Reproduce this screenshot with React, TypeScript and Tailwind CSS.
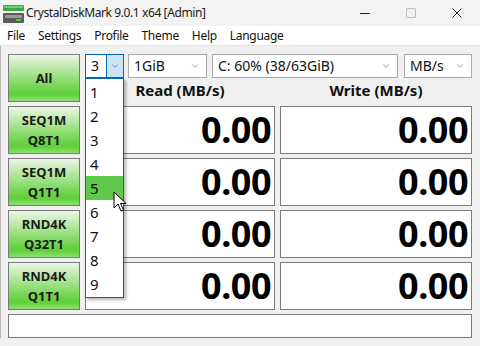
import { ChevronDown } from 'lucide-react'

const font = { fontFamily: '"Noto Sans", "Open Sans", sans-serif' }

function Combo({ text, width, open }: { text: string; width: string; open?: boolean }) {
  return (
    <div
      className={`relative flex h-[24px] items-center bg-white ${width} ${
        open ? 'border border-[#0067c0]' : 'border border-[#a8a8a8]'
      }`}
    >
      <span className="pl-[5px] text-[14px] leading-none text-[#111]">{text}</span>
      {open ? (
        <div className="ml-auto flex h-full w-[17px] items-center justify-center border-l border-[#0067c0] bg-[#cce4f7]">
          <ChevronDown size={10} strokeWidth={1.5} className="text-[#555]" />
        </div>
      ) : (
        <ChevronDown size={10} strokeWidth={1.5} className="ml-auto mr-[6px] text-[#666]" />
      )}
    </div>
  )
}

function TestButton({ lines, height }: { lines: string[]; height: string }) {
  return (
    <div
      className={`flex w-[72px] ${height} shrink-0 flex-col items-center justify-center border border-[#7a7a7a] bg-[linear-gradient(to_bottom,#eaf6e4_0%,#b9e8a6_30%,#7ed85e_65%,#5fcf3a_85%,#8ee072_100%)]`}
    >
      {lines.map((l) => (
        <span key={l} className="text-[13px] font-bold leading-[20px] text-[#1b1b1b]">
          {l}
        </span>
      ))}
    </div>
  )
}

function Value() {
  return (
    <div className="flex h-[48px] items-center justify-end border border-[#7a7a7a] bg-white pr-[3px]">
      <span className="text-[36px] font-bold leading-none tracking-[-0.5px] text-black">0.00</span>
    </div>
  )
}

function AppIcon() {
  return (
    <svg width="22" height="18" viewBox="0 0 22 18">
      <rect x="0" y="0" width="21" height="6" rx="1" fill="#3fa54a" />
      <rect x="1" y="1" width="19" height="2" fill="#6fcf72" />
      <rect x="0" y="8" width="21" height="10" rx="1" fill="#5b5b5b" />
      <rect x="2" y="10" width="17" height="3" fill="#9a9a9a" />
      <rect x="13" y="14" width="5" height="2" fill="#3fd04a" />
    </svg>
  )
}

export default function App() {
  const rows = [
    ['SEQ1M', 'Q8T1'],
    ['SEQ1M', 'Q1T1'],
    ['RND4K', 'Q32T1'],
    ['RND4K', 'Q1T1'],
  ]
  return (
    <div className="relative h-[346px] w-[480px] overflow-hidden bg-[#f0f0f0]" style={font}>
      {/* title bar */}
      <div className="flex h-[26px] items-center bg-[#f3f3f3]">
        <div className="ml-[3px] mt-[1px]">
          <AppIcon />
        </div>
        <span className="ml-[1px] text-[12px] tracking-[-0.4px] text-[#1a1a1a]">CrystalDiskMark 9.0.1 x64 [Admin]</span>
        <div className="ml-auto flex h-full items-center">
          <div className="flex w-[46px] justify-center">
            <div className="h-px w-[10px] bg-[#222]" />
          </div>
          <div className="flex w-[46px] justify-center">
            <div className="h-[10px] w-[10px] rounded-[1px] border border-[#bdbdbd]" />
          </div>
          <div className="flex w-[46px] justify-center">
            <svg width="10" height="10" viewBox="0 0 10 10">
              <path d="M0.5 0.5 L9.5 9.5 M9.5 0.5 L0.5 9.5" stroke="#222" strokeWidth="1" />
            </svg>
          </div>
        </div>
      </div>
      {/* menu */}
      <div className="flex h-[20px] items-center gap-[13px] border-b border-[#e4e4e4] bg-white pl-[7px] text-[12px] tracking-[-0.3px] text-[#111]">
        <span>File</span>
        <span>Settings</span>
        <span>Profile</span>
        <span>Theme</span>
        <span>Help</span>
        <span>Language</span>
      </div>
      {/* body */}
      <div className="flex flex-col border-l border-[#b8b8b8] pl-[7px] pt-[8px]">
        <div className="flex">
          <TestButton lines={['All']} height="h-[48px]" />
          <div className="ml-[5px] flex flex-col">
            <div className="flex h-[24px]">
              <Combo text="3" width="w-[39px]" open />
              <div className="ml-[4px]">
                <Combo text="1GiB" width="w-[79px]" />
              </div>
              <div className="ml-[5px]">
                <Combo text="C: 60% (38/63GiB)" width="w-[186px]" />
              </div>
              <div className="ml-[6px]">
                <Combo text="MB/s" width="w-[68px]" />
              </div>
            </div>
            <div className="flex h-[24px] items-center">
              <div className="w-[190px] text-center text-[15px] font-bold text-[#111]">Read (MB/s)</div>
              <div className="ml-[5px] w-[192px] text-center text-[15px] font-bold text-[#111]">Write (MB/s)</div>
            </div>
          </div>
        </div>
        <div className="mt-[4px] flex flex-col gap-[4px]">
          {rows.map((r, i) => (
            <div key={i} className="flex">
              <TestButton lines={r} height="h-[48px]" />
              <div className="ml-[5px] w-[190px]">
                <Value />
              </div>
              <div className="ml-[5px] w-[192px]">
                <Value />
              </div>
            </div>
          ))}
        </div>
        <div className="mt-[4px] h-[24px] w-[464px] border border-[#7a7a7a] bg-white" />
      </div>
      {/* open dropdown list */}
      <div className="absolute left-[85px] top-[78px] w-[39px] border border-[#0067c0] bg-white py-px shadow-[2px_2px_3px_rgba(0,0,0,0.3)]">
        {[1, 2, 3, 4, 5, 6, 7, 8, 9].map((n) => (
          <div
            key={n}
            className={`flex h-[24px] items-center pl-[4px] text-[15px] text-[#111] ${n === 5 ? 'bg-[#5fc94b]' : ''}`}
          >
            {n}
          </div>
        ))}
      </div>
      {/* mouse cursor */}
      <svg className="absolute left-[113px] top-[191px]" width="14" height="22" viewBox="0 0 14 22">
        <path
          d="M1 1 L1 17 L5 13 L8 20 L10.5 19 L7.5 12.5 L13 12.5 Z"
          fill="white"
          stroke="black"
          strokeWidth="1"
          strokeLinejoin="round"
        />
      </svg>
    </div>
  )
}
